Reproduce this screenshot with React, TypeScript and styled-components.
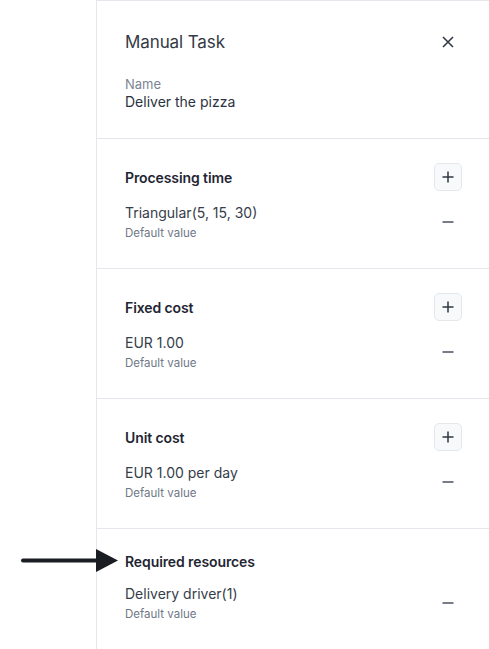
import React from 'react';
import styled, { createGlobalStyle } from 'styled-components';

const GlobalStyle = createGlobalStyle`
  html, body {
    margin: 0;
    padding: 0;
    background: #fff;
  }
  body {
    font-family: 'Inter', 'Noto Sans', Arial, sans-serif;
    color: #2b3240;
  }
`;

const Page = styled.div`
  position: relative;
  width: 489px;
  height: 649px;
  display: flex;
  justify-content: flex-end;
  overflow: hidden;
`;

const Panel = styled.aside`
  width: 393px;
  border-left: 1px solid #e4e7ec;
  border-top: 1px solid #e4e7ec;
  box-sizing: border-box;
  display: flex;
  flex-direction: column;
`;

const Header = styled.div`
  flex-shrink: 0;
  height: 138px;
  box-sizing: border-box;
  padding: 28px 27px 0 28px;
  border-bottom: 1px solid #e4e7ec;
`;

const TitleRow = styled.div`
  display: flex;
  align-items: center;
  justify-content: space-between;
  height: 26px;
`;

const Title = styled.h2`
  margin: 0;
  font-size: 17px;
  font-weight: 400;
  color: #333a45;
  letter-spacing: -0.1px;
`;

const IconButton = styled.button<{ $boxed?: boolean }>`
  width: 28px;
  height: 28px;
  padding: 0;
  display: flex;
  align-items: center;
  justify-content: center;
  background: ${p => (p.$boxed ? '#f8f9fb' : 'transparent')};
  border: 1px solid ${p => (p.$boxed ? '#e4e7ec' : 'transparent')};
  border-radius: 5px;
  color: #2f3744;
  cursor: pointer;
`;

const FieldLabel = styled.div`
  margin-top: 21px;
  font-size: 13px;
  line-height: 17px;
  color: #7a8594;
`;

const FieldValue = styled.div`
  font-size: 14px;
  line-height: 18px;
  color: #2b3240;
`;

const Section = styled.section<{ $hasAdd: boolean }>`
  flex-shrink: 0;
  height: 130px;
  box-sizing: border-box;
  padding: ${p => (p.$hasAdd ? '24px' : '21px')} 27px 0 28px;
  border-bottom: 1px solid #e4e7ec;
  display: flex;
  flex-direction: column;
`;

const SectionHead = styled.div<{ $hasAdd: boolean }>`
  display: flex;
  align-items: center;
  justify-content: space-between;
  min-height: ${p => (p.$hasAdd ? '28px' : '22px')};
`;

const SectionTitle = styled.h3`
  margin: 0;
  font-size: 14px;
  font-weight: 600;
  color: #1f2633;
  letter-spacing: -0.1px;
`;

const ValueRow = styled.div`
  margin-top: 12px;
  display: flex;
  align-items: center;
  justify-content: space-between;
`;

const ValueText = styled.div`
  display: flex;
  flex-direction: column;
`;

const Value = styled.div`
  font-size: 14px;
  line-height: 20px;
  color: #363d4a;
`;

const Hint = styled.div`
  margin-top: 2px;
  font-size: 11.5px;
  line-height: 16px;
  color: #6f7886;
`;

const Arrow = styled.svg`
  position: absolute;
  left: 18px;
  top: 547px;
`;

const PlusIcon = () => (
  <svg width="14" height="14" viewBox="0 0 14 14">
    <path d="M7 1.5v11M1.5 7h11" stroke="#2f3744" strokeWidth="1.5" />
  </svg>
);

const MinusIcon = () => (
  <svg width="14" height="14" viewBox="0 0 14 14">
    <path d="M1.5 7h11" stroke="#4a5260" strokeWidth="1.5" />
  </svg>
);

const CloseIcon = () => (
  <svg width="14" height="14" viewBox="0 0 14 14">
    <path d="M2 2l10 10M12 2L2 12" stroke="#333a45" strokeWidth="1.6" />
  </svg>
);

const sections = [
  { title: 'Processing time', value: 'Triangular(5, 15, 30)', add: true },
  { title: 'Fixed cost', value: 'EUR 1.00', add: true },
  { title: 'Unit cost', value: 'EUR 1.00 per day', add: true },
  { title: 'Required resources', value: 'Delivery driver(1)', add: false },
];

export default function App() {
  return (
    <>
      <GlobalStyle />
      <Page>
        <Panel>
          <Header>
            <TitleRow>
              <Title>Manual Task</Title>
              <IconButton aria-label="Close">
                <CloseIcon />
              </IconButton>
            </TitleRow>
            <FieldLabel>Name</FieldLabel>
            <FieldValue>Deliver the pizza</FieldValue>
          </Header>
          {sections.map(s => (
            <Section key={s.title} $hasAdd={s.add}>
              <SectionHead $hasAdd={s.add}>
                <SectionTitle>{s.title}</SectionTitle>
                {s.add && (
                  <IconButton $boxed aria-label={`Add ${s.title}`}>
                    <PlusIcon />
                  </IconButton>
                )}
              </SectionHead>
              <ValueRow>
                <ValueText>
                  <Value>{s.value}</Value>
                  <Hint>Default value</Hint>
                </ValueText>
                <IconButton aria-label="Remove">
                  <MinusIcon />
                </IconButton>
              </ValueRow>
            </Section>
          ))}
        </Panel>
        <Arrow width="104" height="28" viewBox="0 0 104 28">
          <path d="M5 13.5H82" stroke="#1a1d22" strokeWidth="4" strokeLinecap="round" />
          <path d="M78 2L100 13.5L78 25Z" fill="#1a1d22" />
        </Arrow>
      </Page>
    </>
  );
}
